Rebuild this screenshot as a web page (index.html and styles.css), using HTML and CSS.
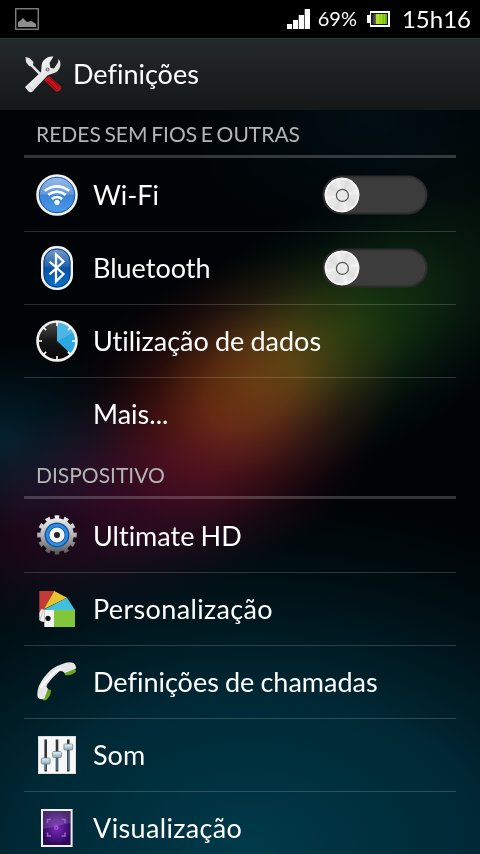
FILE: index.html
```html
<!DOCTYPE html>
<html lang="pt">
<head>
    <meta charset="UTF-8">
    <meta name="viewport" content="width=device-width, initial-scale=1.0">
    <title>Definições</title>
    <link rel="stylesheet" href="styles.css">
</head>
<body>
    <div class="screen">
        <svg class="wallpaper" viewBox="0 0 480 854">
            <defs>
                <radialGradient id="glowTeal"><stop offset="0" stop-color="#003a4a"/><stop offset=".45" stop-color="#003140" stop-opacity=".8"/><stop offset="1" stop-color="#002028" stop-opacity="0"/></radialGradient>
                <radialGradient id="glowOrange"><stop offset="0" stop-color="#442200"/><stop offset=".3" stop-color="#442000" stop-opacity=".82"/><stop offset=".65" stop-color="#381600" stop-opacity=".3"/><stop offset="1" stop-color="#301000" stop-opacity="0"/></radialGradient>
                <radialGradient id="glowGreen"><stop offset="0" stop-color="#143408"/><stop offset=".35" stop-color="#122e09" stop-opacity=".8"/><stop offset=".7" stop-color="#0c240e" stop-opacity=".3"/><stop offset="1" stop-color="#062010" stop-opacity="0"/></radialGradient>
                <radialGradient id="glowRed"><stop offset="0" stop-color="#320604"/><stop offset=".35" stop-color="#300406" stop-opacity=".8"/><stop offset=".7" stop-color="#280408" stop-opacity=".35"/><stop offset="1" stop-color="#200008" stop-opacity="0"/></radialGradient>
                <radialGradient id="glowPink"><stop offset="0" stop-color="#24041a"/><stop offset=".4" stop-color="#220316" stop-opacity=".8"/><stop offset=".7" stop-color="#1e0312" stop-opacity=".35"/><stop offset="1" stop-color="#180010" stop-opacity="0"/></radialGradient>
                <radialGradient id="glowBlue"><stop offset="0" stop-color="#04202c"/><stop offset=".5" stop-color="#031c28" stop-opacity=".5"/><stop offset="1" stop-color="#001018" stop-opacity="0"/></radialGradient>
            </defs>
            <ellipse cx="250" cy="850" rx="520" ry="350" fill="url(#glowTeal)"/>
            <g class="glow">
                <ellipse cx="370" cy="120" rx="180" ry="120" fill="url(#glowBlue)" opacity=".3"/>
                <ellipse cx="0" cy="440" rx="150" ry="100" fill="url(#glowBlue)" opacity=".9"/>
                <ellipse cx="115" cy="505" rx="260" ry="110" fill="url(#glowPink)" transform="rotate(-15 115 505)"/>
                <ellipse cx="220" cy="420" rx="190" ry="145" fill="url(#glowRed)" transform="rotate(-30 220 420)"/>
                <ellipse cx="252" cy="385" rx="170" ry="125" fill="url(#glowOrange)" transform="rotate(-35 252 385)"/>
                <ellipse cx="345" cy="330" rx="200" ry="125" fill="url(#glowGreen)" transform="rotate(-30 345 330)"/>
                <ellipse cx="480" cy="260" rx="150" ry="140" fill="url(#glowGreen)" opacity=".2"/>
            </g>
        </svg>

        <div class="status-bar">
            <svg class="status-picture" width="24" height="22" viewBox="0 0 24 22">
                <rect x=".75" y=".75" width="22.500" height="20.500" fill="none" stroke="#8a8a8a" stroke-width="1.300"/>
                <path d="M3 19v-5l2-1 3-3 4 4 4-1 2 1 3 2v3z" fill="#8e8e8e"/>
            </svg>
            <svg class="signal" width="23" height="20" viewBox="0 0 23 20">
                <path d="M0 15h5v5H0zM6 11h5v9H6zM11.700 6h5.300v14h-5.300zM17.700 0H23v20h-5.300z" fill="#fff"/>
            </svg>
            <span class="percent">69%</span>
            <svg class="battery" width="23" height="16" viewBox="0 0 23 16">
                <defs>
                    <linearGradient id="charge"><stop offset="0" stop-color="#b9e62b"/><stop offset="1" stop-color="#69b006"/></linearGradient>
                    <linearGradient id="drained"><stop offset="0" stop-color="#222"/><stop offset="1" stop-color="#666"/></linearGradient>
                </defs>
                <path d="M3 0h20v16H3v-4H0V4h3z" fill="#fff"/>
                <path d="M4 2h17v12H4z" fill="#111"/>
                <path d="M5 3h4v10H5z" fill="url(#drained)"/>
                <path d="M9 3h11v10H9z" fill="url(#charge)"/>
                <path d="M11.500 3v10M14.500 3v10M17.500 3v10" stroke="#c5f04a" stroke-width=".4"/>
            </svg>
            <span class="time">15h16</span>
        </div>

        <div class="action-bar">
            <svg width="40" height="40" viewBox="0 0 40 40">
                <defs>
                    <linearGradient id="steel" x1="0" y1="0" x2="1" y2="1"><stop offset="0" stop-color="#fff"/><stop offset="1" stop-color="#d2d2d2"/></linearGradient>
                </defs>
                <path d="M2.500 2l4 1 4 4-.5 3L22 22l-2 2L8 11.500l-2-.5-3-4z" fill="#e4e4e4"/>
                <path d="M21 25l5-4 12 10.500q1 3-3 5h-2z" fill="#c5121a"/>
                <path d="M24 26l10 9M27 23l9.500 9" stroke="#7c090e" stroke-width="1"/>
                <path d="M2 32L18 17c1-6 0-9 3-12 3-3 6-4 9.500-3.500L26.500 8l1 5 3.500.5 4-6 .5-3.500c3.500 4 2 10-2 13-3 2-6 1.500-9 3.500L9 37q-2 .5-3.500-.5z" fill="url(#steel)"/>
                <path d="M4.500 30l6 5.500" stroke="#bbb" stroke-width=".8"/>
                <circle cx="24.500" cy="14.500" r="2" fill="#777"/>
                <path d="M22.500 13.500l4 2M24.500 12.500v4" stroke="#bbb" stroke-width=".7"/>
            </svg>
            <h1>Definições</h1>
        </div>

        <div class="settings">
            <h2>REDES SEM FIOS E OUTRAS</h2>
            <ul>
                <li>
                    <svg class="icon" viewBox="0 0 48 48">
                        <defs><linearGradient id="wifiBlue" x1="0" y1="0" x2="0" y2="1"><stop offset="0" stop-color="#9fbfe8"/><stop offset=".48" stop-color="#5f98dc"/><stop offset=".5" stop-color="#3b83d8"/><stop offset="1" stop-color="#4d9bea"/></linearGradient></defs>
                        <circle cx="24" cy="24" r="19.500" fill="url(#wifiBlue)" stroke="#f4f2ef" stroke-width="2.600"/>
                        <circle cx="24" cy="24" r="17.700" fill="none" stroke="#1d58a8" stroke-width="1"/>
                        <g fill="none" stroke="#fff" stroke-width="2.600">
                            <path d="M11.800 19.800q12.200-9 24.400 0"/>
                            <path d="M15.300 23.900q8.700-6.600 17.400 0"/>
                            <path d="M18.800 28q5.200-4 10.400 0"/>
                        </g>
                        <circle cx="24" cy="31.300" r="2.600" fill="#fff"/>
                    </svg>
                    <span class="label">Wi-Fi</span>
                    <svg class="toggle" viewBox="0 0 106 40"><use href="#switchOff"/></svg>
                </li>
                <li>
                    <svg class="icon" viewBox="0 0 48 48">
                        <defs><linearGradient id="btBlue" x1="0" y1="0" x2="0" y2="1"><stop offset="0" stop-color="#7d9fcb"/><stop offset=".45" stop-color="#2565ad"/><stop offset=".5" stop-color="#0a51a2"/><stop offset="1" stop-color="#0876cf"/></linearGradient></defs>
                        <rect x="9.300" y="3.300" width="29.400" height="41.400" rx="14" fill="url(#btBlue)" stroke="#f2f2f2" stroke-width="2.600"/>
                        <rect x="11" y="5" width="26" height="38" rx="12.500" fill="none" stroke="#073a77" stroke-width="1"/>
                        <path d="M16.500 17.500L30.500 30 23 37.500v-27l7.500 7L16.500 30.500" fill="none" stroke="#fff" stroke-width="2.300"/>
                    </svg>
                    <span class="label">Bluetooth</span>
                    <svg class="toggle" viewBox="0 0 106 40"><use href="#switchOff"/></svg>
                </li>
                <li>
                    <svg class="icon" viewBox="0 0 48 48">
                        <defs><linearGradient id="dial" x1="0" y1="0" x2="0" y2="1"><stop offset="0" stop-color="#4b4b4b"/><stop offset=".5" stop-color="#161616"/><stop offset="1" stop-color="#060606"/></linearGradient></defs>
                        <circle cx="24" cy="24" r="19.600" fill="url(#dial)"/>
                        <path d="M24 24V5a19 19 0 0 1 14 32z" fill="#2ba8e0"/>
                        <path d="M24 24V5a19 19 0 0 1 17 10z" fill="#fff" opacity=".16"/>
                        <circle cx="24" cy="24" r="19.500" fill="none" stroke="#f2f0ee" stroke-width="2.600"/>
                        <path d="M24 5v4M24 39v4M5 24h4M39 24h4M10.600 10.600l2.500 2.500M34.900 34.900l2.500 2.500M10.600 37.400l2.500-2.500M34.900 13.100l2.500-2.500" stroke="#fff" stroke-width="1.600"/>
                    </svg>
                    <span class="label">Utilização de dados</span>
                </li>
                <li>
                    <span class="icon"></span>
                    <span class="label">Mais...</span>
                </li>
            </ul>

            <h2>DISPOSITIVO</h2>
            <ul>
                <li>
                    <svg class="icon" viewBox="0 0 48 48">
                        <defs><linearGradient id="gear" x1="0" y1="3" x2="0" y2="43" gradientUnits="userSpaceOnUse"><stop offset="0" stop-color="#f4f4f4"/><stop offset=".5" stop-color="#b5b5b5"/><stop offset="1" stop-color="#4c504e"/></linearGradient></defs>
                        <circle cx="24" cy="23" r="17.500" fill="none" stroke="url(#gear)" stroke-width="4.500" pathLength="24" stroke-dasharray="1 1" stroke-dashoffset=".5"/>
                        <circle cx="24" cy="23" r="16.800" fill="url(#gear)"/>
                        <circle cx="24" cy="23" r="12.500" fill="#1557a8"/>
                        <circle cx="24" cy="23" r="9.700" fill="none" stroke="#2f8ee0" stroke-width="2.400"/>
                        <circle cx="24" cy="23" r="5.300" fill="#222" stroke="#f4f4f4" stroke-width="4.600"/>
                    </svg>
                    <span class="label">Ultimate HD</span>
                </li>
                <li>
                    <svg class="icon" viewBox="0 0 48 48">
                        <path d="M6.300 6h15L11 25l-4.700 4z" fill="#c33b37"/>
                        <path d="M21.300 6L34 12.700 11 24z" fill="#e8c52e"/>
                        <path d="M34 12.700L42 25H10z" fill="#41bfdc"/>
                        <path d="M6.300 28l2-4 3 1v12l-3-.5-2-1.500z" fill="#eee"/>
                        <path d="M7 35l3-9" stroke="#aaa" stroke-width=".7"/>
                        <path d="M11.300 25H22v17H11.300z" fill="#f3f3f3"/>
                        <path d="M21 25h21v17H21z" fill="#82c63b"/>
                        <circle cx="15" cy="33.300" r="2.600" fill="#111"/>
                    </svg>
                    <span class="label wide">Personalização</span>
                </li>
                <li>
                    <svg class="icon" viewBox="0 0 48 48">
                        <path d="M31 14l11-3.500 1 3q-4 4.500-11 3.500z" fill="#67a51e"/>
                        <path d="M9.500 42l3-11.500 5.500 1.500q0 7-6 10.500z" fill="#67a51e"/>
                        <path d="M4.300 36q0-8 7-17Q19 9 28 6.500q8-3.500 12.500-1.500 3 2.500 2.500 5.500l-11 4.500q-4-3.500-6.500-1-6 5-11 12-2 3 .5 4.500l-3.500 10Q4 43 4.300 36z" fill="#e6e6e6"/>
                        <path d="M8 30q7-12 20-20" fill="none" stroke="#fff" stroke-width="2"/>
                    </svg>
                    <span class="label">Definições de chamadas</span>
                </li>
                <li>
                    <svg class="icon" viewBox="0 0 48 48">
                        <defs><linearGradient id="knob" x1="0" y1="0" x2="0" y2="1"><stop offset="0" stop-color="#eef6f9"/><stop offset="1" stop-color="#87aab9"/></linearGradient></defs>
                        <rect x="5.500" y="5.500" width="37" height="37" fill="#f7f7f7" stroke="#ddd"/>
                        <path d="M12.700 8.500v32M24 8.500v32M35.300 8.500v32" stroke="#333" stroke-width="2.600"/>
                        <path d="M12.700 33v6M24 27v12M35.300 20v19" stroke="#4b92b8" stroke-width="1.100"/>
                        <g fill="url(#knob)" stroke="#71868f" stroke-width=".8">
                            <rect x="8.300" y="27" width="8.800" height="6" rx="1"/>
                            <rect x="19.600" y="20.500" width="8.800" height="6" rx="1"/>
                            <rect x="30.900" y="13" width="8.800" height="6" rx="1"/>
                        </g>
                    </svg>
                    <span class="label">Som</span>
                </li>
                <li>
                    <svg class="icon" viewBox="0 0 48 48">
                        <defs><radialGradient id="violet"><stop offset="0" stop-color="#7a2bbd"/><stop offset=".6" stop-color="#4a1580"/><stop offset="1" stop-color="#2b0955"/></radialGradient></defs>
                        <rect x="9" y="6" width="29.600" height="36" fill="url(#violet)" stroke="#f1eef3" stroke-width="2"/>
                        <path d="M10 7h27.600v12L10 25z" fill="#fff" opacity=".14"/>
                        <path d="M14.500 19v-3.500H18M28.500 15.500H32V19M14.500 28.500V32H18M28.500 32H32v-3.500" fill="none" stroke="#a35bd6" stroke-width="1.500"/>
                        <circle cx="23.300" cy="23.700" r="1.600" fill="none" stroke="#b05be0" stroke-width="1.100"/>
                    </svg>
                    <span class="label wide">Visualização</span>
                </li>
            </ul>
        </div>

        <!-- shared switch drawing -->
        <svg class="sprites">
            <defs>
                <g id="switchOff">
                    <rect x="1.500" y="1.500" width="103" height="37" rx="18.500" fill="#3c3c3c" stroke="#2c2c2c" stroke-width="2"/>
                    <circle cx="20" cy="20" r="17.300" fill="#e6e6e6"/>
                    <path d="M20 20L13 4.500h5zM20 20l16-6v5zM20 20l7 15.500h-5zM20 20L4 26v-5z" fill="#f0f0f0"/>
                    <path d="M20 20L24 4l5 2zM20 20l14 6-3 5zM20 20l-4 16-5-2zM20 20L6 14l3-5z" fill="#dedede"/>
                    <circle cx="20" cy="20" r="16.500" fill="none" stroke="#f6f6f6" stroke-width="1.600"/>
                    <circle cx="20.400" cy="20.400" r="6" fill="#e9e9e9" stroke="#555" stroke-width="1.200"/>
                </g>
            </defs>
        </svg>
    </div>
</body>
</html>
```
FILE: styles.css
```css
body {
    margin: 0;
    background-color: #000;
    color: #fff;
    font-family: Lato, sans-serif;
    font-variant-ligatures: none;
}

.screen {
    position: relative;
    width: 480px;
    height: 854px;
    overflow: hidden;
    background-color: #000406;
}

.wallpaper {
    position: absolute;
    top: 0;
    left: 0;
    width: 480px;
    height: 854px;
}

.glow ellipse {
    mix-blend-mode: screen;
}

.status-bar, .action-bar, .settings {
    position: relative;
}

.status-bar {
    display: flex;
    align-items: center;
    height: 38px;
    box-sizing: border-box;
    padding: 0 9px 0 15px;
    background-color: #000;
}

.status-picture {
    margin-right: auto;
}

.percent {
    font-size: 20px;
    margin: 0 10px 2px 8px;
}

.time {
    font-size: 24px;
    margin: 0 0 2px 12px;
}

.action-bar {
    display: flex;
    align-items: center;
    height: 72px;
    box-sizing: border-box;
    padding-left: 23px;
    border-top: 1px solid #34393b;
    background: linear-gradient(#23282a, #151819);
}

h1 {
    margin: 0 0 2px 10px;
    font-size: 27px;
    font-weight: normal;
}

.settings {
    padding: 0 24px;
}

h2 {
    height: 48px;
    box-sizing: border-box;
    margin: 0 0 1px;
    padding-left: 12px;
    border-bottom: 3px solid rgba(255, 255, 255, 0.2);
    color: #b4b6b6;
    font-size: 21px;
    font-weight: normal;
    line-height: 48px;
    word-spacing: -1.7px;
}

ul {
    margin: 0;
    padding: 0;
    list-style: none;
}

li {
    display: flex;
    align-items: center;
    height: 72px;
    padding-left: 9px;
    padding-right: 28px;
    border-bottom: 1px solid rgba(255, 255, 255, 0.17);
}

li:last-child {
    border-bottom-color: transparent;
}

.icon {
    flex: none;
    width: 48px;
    height: 48px;
}

.label {
    flex: 1;
    margin: 0 0 2px 12px;
    font-size: 27px;
    white-space: nowrap;
    word-spacing: -0.8px;
}

.wide {
    letter-spacing: 0.35px;
}

.toggle {
    width: 106px;
    height: 40px;
}

.sprites {
    position: absolute;
    width: 0;
    height: 0;
}
```
